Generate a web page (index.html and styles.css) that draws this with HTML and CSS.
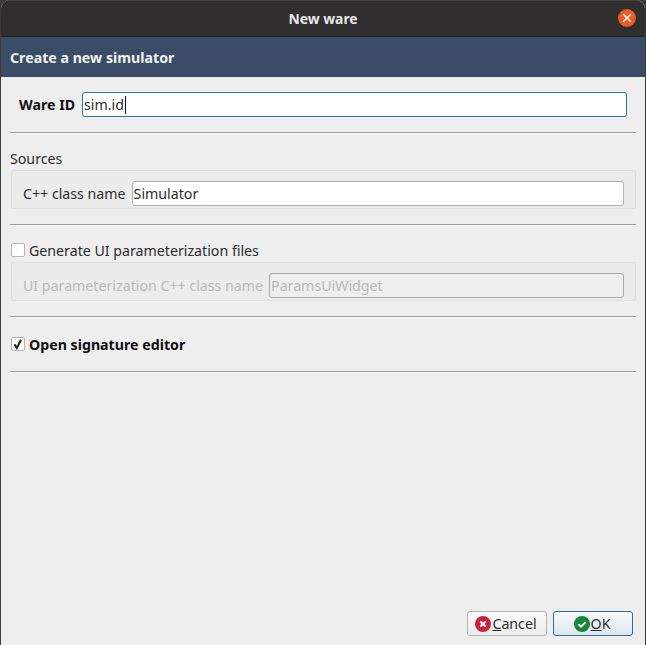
FILE: index.html
```html
<!DOCTYPE html>
<html lang="en">
<head>
<meta charset="utf-8">
<title>New ware</title>
<link rel="stylesheet" href="styles.css">
</head>
<body>
<div class="window">
  <header class="titlebar">
    <span class="title">New ware</span>
    <span class="close">
      <svg viewBox="0 0 18 18" width="18" height="18"><circle cx="9" cy="9" r="9" fill="#ee5a24"/><path d="M5.2 5.2l7.6 7.6M12.8 5.2l-7.6 7.6" stroke="#fff" stroke-width="1.5" fill="none"/></svg>
    </span>
  </header>
  <div class="banner">Create a new simulator</div>
  <main class="content">
    <div class="row-id">
      <label class="id-label">Ware ID</label>
      <div class="field focus">sim.id<span class="caret"></span></div>
    </div>
    <hr class="sep sep-1">
    <div class="section-label">Sources</div>
    <div class="group">
      <span>C++ class name</span>
      <div class="field">Simulator</div>
    </div>
    <hr class="sep sep-2">
    <div class="check-row">
      <span class="check"></span>
      <span>Generate UI parameterization files</span>
    </div>
    <div class="group disabled">
      <span>UI parameterization C++ class name</span>
      <div class="field">ParamsUiWidget</div>
    </div>
    <hr class="sep sep-3">
    <div class="check-row check-row-bold">
      <span class="check">
        <svg viewBox="0 0 14 14" width="14" height="14"><path d="M3.4 7.4l2.4 3.6L10 2.8" stroke="#222" stroke-width="2" fill="none"/></svg>
      </span>
      <strong>Open signature editor</strong>
    </div>
    <hr class="sep sep-4">
  </main>
  <footer class="actions">
    <button class="btn">
      <svg viewBox="0 0 18 18" width="18" height="18"><circle cx="9" cy="9" r="8" fill="#c8233a"/><path d="M6.3 6.5l5.4 5M11.7 6.5l-5.4 5" stroke="#fff" stroke-width="1.8" fill="none"/></svg>
      <span><u>C</u>ancel</span>
    </button>
    <button class="btn btn-default">
      <svg viewBox="0 0 18 18" width="18" height="18"><circle cx="9" cy="9" r="8" fill="#16873a"/><path d="M5.4 9.2l2.6 2.5 4.6-4.6" stroke="#fff" stroke-width="1.8" fill="none"/></svg>
      <span><u>O</u>K</span>
    </button>
  </footer>
</div>
</body>
</html>
```

FILE: styles.css
```css
* { box-sizing: border-box; }
html, body { margin: 0; height: 100%; }
body {
  background: #3c3b3a;
  overflow: hidden;
  font-family: "Noto Sans", "Open Sans", sans-serif;
  font-size: 14.2px;
  color: #2c2c2c;
  padding: 0 1px 0 1px;
}
.window {
  height: 645px;
  background: #eeeeee;
  display: flex;
  flex-direction: column;
  border-radius: 9px 9px 0 0;
  overflow: hidden;
}
.titlebar {
  height: 37px;
  flex: none;
  background: #302e2e;
  border-top: 1px solid #454343;
  border-bottom: 1px solid #1e1d1d;
  display: flex;
  align-items: center;
  justify-content: center;
  position: relative;
}
.title { color: #e8e8e8; font-weight: 700; font-size: 13.9px; }
.close { position: absolute; right: 9px; top: 8px; width: 18px; height: 18px; line-height: 0; }
.banner {
  height: 40px;
  flex: none;
  background: #3a4c66;
  color: #f2f2f2;
  font-weight: 700;
  display: flex;
  align-items: center;
  padding-left: 9px;
}
.content { flex: 1; padding: 15px 9px 0; display: flex; flex-direction: column; }
.row-id { display: flex; align-items: center; padding: 0 9px; gap: 7px; }
.id-label { font-weight: 700; color: #111; }
.field {
  flex: 1;
  height: 25px;
  background: #fff;
  border: 1px solid #b2b2b2;
  border-radius: 3px;
  padding-left: 1px;
  display: flex;
  align-items: center;
  color: #2c2c2c;
}
.field.focus { border-color: #2a76a8; }
.caret { width: 1px; height: 18px; background: #111; margin-left: 1px; }
.sep { border: 0; height: 2px; margin: 0; background: linear-gradient(#9c9c9c 50%, #fbfbfb 50%); flex: none; }
.sep-1 { margin-top: 15px; }
.sep-2 { margin-top: 15px; }
.sep-3 { margin-top: 15px; }
.sep-4 { margin-top: 17px; }
.section-label { margin-top: 15px; line-height: 19px; }
.group {
  margin: 2px 0 0 1px;
  height: 39px;
  background: #ececec;
  border: 1px solid #e0e0e0;
  border-radius: 2px;
  display: flex;
  align-items: center;
  gap: 6px;
  padding: 10px 11px 2px 11px;
}
.group.disabled { color: #b9b9b9; }
.disabled .field { background: #eeeeee; color: #b9b9b9; border-color: #a9a9a9; }
.check-row { display: flex; align-items: center; gap: 4px; margin-top: 14px; height: 20px; }
.check-row-bold { margin-top: 16px; }
.check {
  width: 14px;
  height: 14px;
  background: #fff;
  border: 1px solid #b4b4b4;
  border-radius: 2px;
  margin-left: 1px;
  display: block;
  line-height: 0;
  position: relative;
}
.check svg { position: absolute; left: -1px; top: -1px; }
strong { color: #111; }
.actions { flex: none; display: flex; justify-content: flex-end; gap: 6px; padding: 0 12px 9px 0; }
.btn {
  width: 80px;
  height: 25px;
  font: inherit;
  color: #2c2c2c;
  background: linear-gradient(#fafafa, #ececec);
  border: 1px solid #b4b4b4;
  border-radius: 3px;
  display: flex;
  align-items: center;
  justify-content: center;
  padding: 0 3px 0 0;
}
.btn-default { border-color: #2a6f9e; background: linear-gradient(#f6f9fb, #dfe7ec); }
.btn svg { flex: none; }
```
